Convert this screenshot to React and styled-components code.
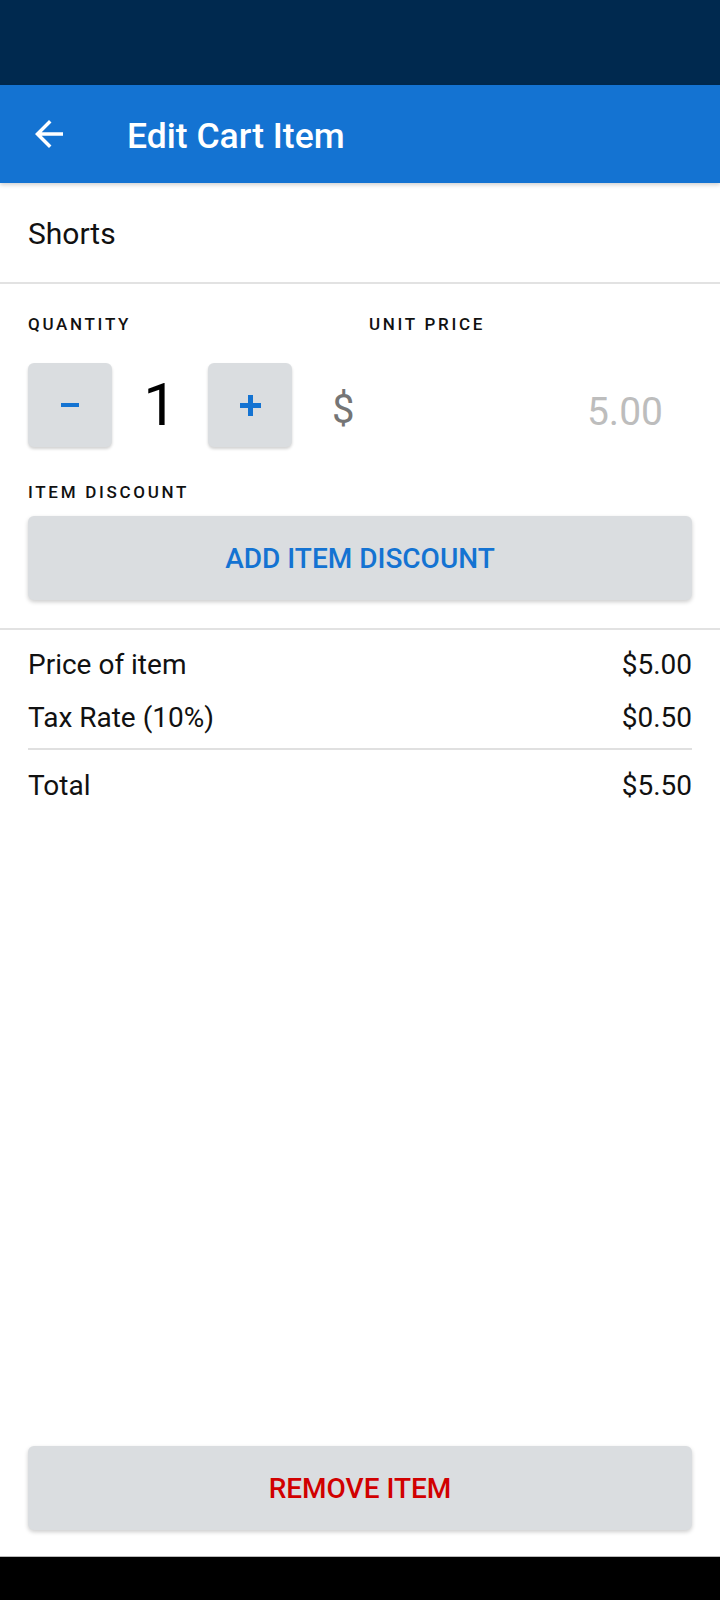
import styled, { createGlobalStyle } from 'styled-components';

const GlobalStyle = createGlobalStyle`
  html, body {
    margin: 0;
    padding: 0;
    background: #ffffff;
  }
  body {
    font-family: Roboto, "Noto Sans", "Liberation Sans", sans-serif;
    color: #111;
  }
  * {
    box-sizing: border-box;
  }
`;

const summaryRows = [
  { label: 'Price of item', value: '$5.00' },
  { label: 'Tax Rate (10%)', value: '$0.50' },
];

const BackArrow = () => (
  <svg width="42" height="42" viewBox="0 0 24 24" fill="#ffffff">
    <path d="M20 11H7.83l5.59-5.59L12 4l-8 8 8 8 1.41-1.41L7.83 13H20v-2z" />
  </svg>
);

const App = () => {
  return (
    <Screen>
      <GlobalStyle />
      <StatusBar />
      <AppBar>
        <IconButton type="button" aria-label="Back">
          <BackArrow />
        </IconButton>
        <Title>Edit Cart Item</Title>
      </AppBar>

      <Content>
        <ItemName>Shorts</ItemName>

        <EditSection>
          <LabelRow>
            <FieldLabel>Quantity</FieldLabel>
            <FieldLabel>Unit Price</FieldLabel>
          </LabelRow>

          <ControlRow>
            <Stepper>
              <StepButton type="button" aria-label="Decrease">
                <MinusMark />
              </StepButton>
              <QtyValue>1</QtyValue>
              <StepButton type="button" aria-label="Increase">
                <PlusMark />
              </StepButton>
            </Stepper>
            <PriceField>
              <Currency>$</Currency>
              <PriceValue>5.00</PriceValue>
            </PriceField>
          </ControlRow>

          <FieldLabel $spaced>Item Discount</FieldLabel>
          <ActionButton type="button">Add Item Discount</ActionButton>
        </EditSection>

        <Summary>
          {summaryRows.map((row) => (
            <SummaryRow key={row.label}>
              <span>{row.label}</span>
              <span>{row.value}</span>
            </SummaryRow>
          ))}
          <SummaryDivider />
          <SummaryRow $total>
            <span>Total</span>
            <span>$5.50</span>
          </SummaryRow>
        </Summary>
      </Content>

      <Footer>
        <ActionButton type="button" $danger>
          Remove Item
        </ActionButton>
      </Footer>
      <NavBar />
    </Screen>
  );
};

const Screen = styled.div`
  display: flex;
  flex-direction: column;
  width: 720px;
  height: 1600px;
  overflow: hidden;
  background: #fff;
`;

const StatusBar = styled.div`
  height: 85px;
  flex-shrink: 0;
  background: #00294f;
`;

const AppBar = styled.header`
  height: 98px;
  flex-shrink: 0;
  display: flex;
  align-items: center;
  padding-left: 28px;
  background: #1473d2;
  box-shadow: 0 2px 4px rgba(0, 0, 0, 0.18);
  position: relative;
  z-index: 1;
`;

const IconButton = styled.button`
  display: flex;
  align-items: center;
  justify-content: center;
  width: 42px;
  height: 42px;
  padding: 0;
  border: none;
  background: transparent;
  cursor: pointer;
`;

const Title = styled.h1`
  margin: 3px 0 0 57px;
  font-size: 35.5px;
  font-weight: 500;
  color: #fff;
`;

const Content = styled.main`
  flex: 1;
  display: flex;
  flex-direction: column;
`;

const ItemName = styled.div`
  height: 101px;
  display: flex;
  align-items: center;
  padding: 2px 28px 0;
  font-size: 30px;
  color: #111;
  border-bottom: 2px solid #e2e2e2;
`;

const EditSection = styled.section`
  display: flex;
  flex-direction: column;
  padding: 30px 28px 28px;
  border-bottom: 2px solid #e2e2e2;
`;

const LabelRow = styled.div`
  display: grid;
  grid-template-columns: 341px 1fr;
`;

const FieldLabel = styled.div`
  font-size: 17px;
  font-weight: 500;
  letter-spacing: 2.7px;
  text-transform: uppercase;
  color: #111;
  line-height: 20px;
  margin-top: ${(p) => (p.$spaced ? '35px' : '0')};
  margin-bottom: ${(p) => (p.$spaced ? '14px' : '0')};
`;

const ControlRow = styled.div`
  display: flex;
  align-items: center;
  margin-top: 29px;
`;

const Stepper = styled.div`
  display: flex;
  align-items: center;
`;

const StepButton = styled.button`
  display: flex;
  align-items: center;
  justify-content: center;
  width: 84px;
  height: 84px;
  padding: 0;
  border: none;
  border-radius: 6px;
  background: #dadde0;
  box-shadow: 0 2px 3px rgba(0, 0, 0, 0.18);
  cursor: pointer;
`;

const MinusMark = styled.span`
  display: block;
  width: 18px;
  height: 4px;
  background: #1473d2;
`;

const PlusMark = styled.span`
  position: relative;
  display: block;
  width: 21px;
  height: 21px;

  &::before,
  &::after {
    content: '';
    position: absolute;
    background: #1473d2;
  }
  &::before {
    left: 0;
    top: 8px;
    width: 21px;
    height: 5px;
  }
  &::after {
    left: 8px;
    top: 0;
    width: 5px;
    height: 21px;
  }
`;

const QtyValue = styled.div`
  width: 96px;
  text-align: center;
  font-size: 60px;
  font-weight: 400;
  color: #000;
  line-height: 1;
`;

const PriceField = styled.div`
  flex: 1;
  display: flex;
  align-items: center;
  justify-content: space-between;
  padding: 8px 29px 0 40px;
`;

const Currency = styled.span`
  font-size: 40px;
  color: #757575;
`;

const PriceValue = styled.span`
  margin-top: 6px;
  font-size: 39px;
  color: #bdbdbd;
`;

const ActionButton = styled.button`
  display: flex;
  align-items: center;
  justify-content: center;
  width: 100%;
  height: 84px;
  border: none;
  border-radius: 6px;
  background: #dadde0;
  box-shadow: 0 2px 4px rgba(0, 0, 0, 0.2);
  font-family: Roboto, "Noto Sans", sans-serif;
  font-size: 28px;
  font-weight: 500;
  text-transform: uppercase;
  color: ${(p) => (p.$danger ? '#d10000' : '#1473d2')};
  cursor: pointer;
`;

const Summary = styled.section`
  display: flex;
  flex-direction: column;
  padding: 8px 28px 0;
`;

const SummaryRow = styled.div`
  display: flex;
  justify-content: space-between;
  align-items: center;
  height: ${(p) => (p.$total ? '70px' : '53px')};
  font-size: 28px;
  color: #111;
`;

const SummaryDivider = styled.hr`
  margin: 4px 0 0;
  border: none;
  border-top: 2px solid #e0e0e0;
`;

const Footer = styled.footer`
  padding: 0 28px 26px;
`;

const NavBar = styled.div`
  height: 44px;
  flex-shrink: 0;
  background: #000;
  border-top: 1px solid #bbbbbb;
`;

export default App;
